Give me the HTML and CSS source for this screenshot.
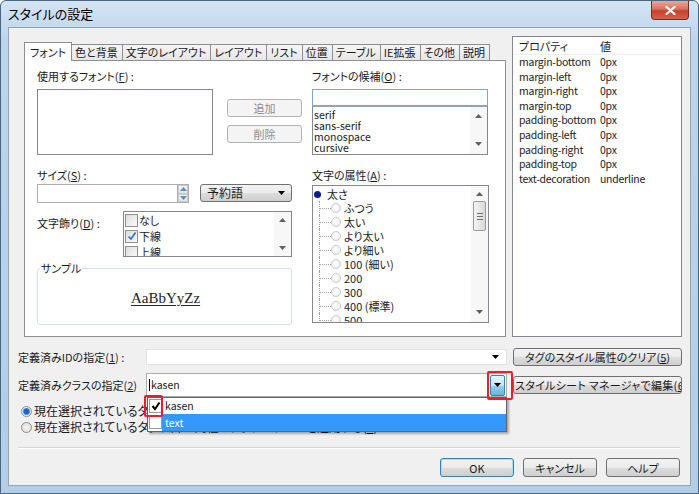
FILE: index.html
```html
<!DOCTYPE html>
<html lang="ja">
<head>
<meta charset="utf-8">
<title>スタイルの設定</title>
<link rel="stylesheet" href="styles.css">
</head>
<body>
<div class="window">
  <div class="titlebar">
    <span class="title">スタイルの設定</span>
    <div class="close"><svg width="11" height="9" viewBox="0 0 11 9"><path d="M1.5 1 L9.5 8 M9.5 1 L1.5 8" stroke="#fff" stroke-width="2.2" stroke-linecap="round"/></svg></div>
  </div>
  <div class="client">
    <div class="top">
      <div class="tabs-area">
        <div class="tabstrip">
          <div class="tab active">フォント</div>
          <div class="tab">色と背景</div>
          <div class="tab">文字のレイアウト</div>
          <div class="tab">レイアウト</div>
          <div class="tab">リスト</div>
          <div class="tab">位置</div>
          <div class="tab">テーブル</div>
          <div class="tab">IE拡張</div>
          <div class="tab">その他</div>
          <div class="tab">説明</div>
        </div>
        <div class="panel">
          <div class="col">
            <div class="lbl">使用するフォント(<u>F</u>) :</div>
            <div class="fontrow">
              <div class="listbox"></div>
              <div class="btncol">
                <div class="btn disabled">追加</div>
                <div class="btn disabled">削除</div>
              </div>
            </div>
            <div class="lbl gap13">サイズ(<u>S</u>) :</div>
            <div class="sizerow">
              <div class="numinput"></div>
              <div class="spin">
                <span class="spin-btn"><svg width="7" height="4" viewBox="0 0 7 4"><path d="M0 4L3.5 0L7 4Z" fill="#5b8fc7"/></svg></span>
                <span class="spin-btn"><svg width="7" height="4" viewBox="0 0 7 4"><path d="M0 0L3.5 4L7 0Z" fill="#5b8fc7"/></svg></span>
              </div>
              <div class="select"><span>予約語</span><svg width="7" height="4" viewBox="0 0 7 4"><path d="M0 0L3.5 4L7 0Z" fill="#000"/></svg></div>
            </div>
            <div class="decorow">
              <div class="lbl deco-lbl">文字飾り(<u>D</u>) :</div>
              <div class="checklist">
                <div class="cl-items">
                  <div class="cl-item"><span class="cb"></span>なし</div>
                  <div class="cl-item"><span class="cb"><svg width="10" height="10" viewBox="0 0 10 10"><path d="M1.5 5.5 L4 8 L8.5 1.5" fill="none" stroke="#2b6fc8" stroke-width="1.6"/></svg></span>下線</div>
                  <div class="cl-item"><span class="cb"></span>上線</div>
                </div>
                <div class="vscroll">
                  <svg width="7" height="4" viewBox="0 0 7 4"><path d="M0 4L3.5 0L7 4Z" fill="#606060"/></svg>
                  <svg width="7" height="4" viewBox="0 0 7 4"><path d="M0 0L3.5 4L7 0Z" fill="#606060"/></svg>
                </div>
              </div>
            </div>
            <fieldset class="sample">
              <legend>サンプル</legend>
              <div class="sample-text">AaBbYyZz</div>
            </fieldset>
          </div>
          <div class="col">
            <div class="lbl">フォントの候補(<u>O</u>) :</div>
            <div class="textinput"></div>
            <div class="fontlist">
              <div class="fl-items">
                <div>serif</div>
                <div>sans-serif</div>
                <div>monospace</div>
                <div>cursive</div>
              </div>
              <div class="vscroll">
                <svg width="7" height="4" viewBox="0 0 7 4"><path d="M0 4L3.5 0L7 4Z" fill="#606060"/></svg>
                <svg width="7" height="4" viewBox="0 0 7 4"><path d="M0 0L3.5 4L7 0Z" fill="#606060"/></svg>
              </div>
            </div>
            <div class="lbl gap13">文字の属性(<u>A</u>) :</div>
            <div class="tree">
              <div class="tree-items">
                <div class="tree-root"><span class="bullet"></span>太さ</div>
                <div class="tree-item"><span class="branch"></span><span class="rb"></span>ふつう</div>
                <div class="tree-item"><span class="branch"></span><span class="rb"></span>太い</div>
                <div class="tree-item"><span class="branch"></span><span class="rb"></span>より太い</div>
                <div class="tree-item"><span class="branch"></span><span class="rb"></span>より細い</div>
                <div class="tree-item"><span class="branch"></span><span class="rb"></span>100 (細い)</div>
                <div class="tree-item"><span class="branch"></span><span class="rb"></span>200</div>
                <div class="tree-item"><span class="branch"></span><span class="rb"></span>300</div>
                <div class="tree-item"><span class="branch"></span><span class="rb"></span>400 (標準)</div>
                <div class="tree-item"><span class="branch"></span><span class="rb"></span>500</div>
              </div>
              <div class="vscroll tree-scroll">
                <svg width="7" height="4" viewBox="0 0 7 4"><path d="M0 4L3.5 0L7 4Z" fill="#606060"/></svg>
                <div class="thumb"><span></span><span></span><span></span></div>
                <div class="track-fill"></div>
                <svg width="7" height="4" viewBox="0 0 7 4"><path d="M0 0L3.5 4L7 0Z" fill="#606060"/></svg>
              </div>
            </div>
          </div>
        </div>
      </div>
      <div class="props">
        <div class="props-head"><span>プロパティ</span><span>値</span></div>
        <div class="props-body">
          <span>margin-bottom</span><span>0px</span>
          <span>margin-left</span><span>0px</span>
          <span>margin-right</span><span>0px</span>
          <span>margin-top</span><span>0px</span>
          <span>padding-bottom</span><span>0px</span>
          <span>padding-left</span><span>0px</span>
          <span>padding-right</span><span>0px</span>
          <span>padding-top</span><span>0px</span>
          <span>text-decoration</span><span>underline</span>
        </div>
      </div>
    </div>

    <div class="form">
      <div class="flbl">定義済みIDの指定(<u>1</u>) :</div>
      <div class="combo id-combo"><svg width="7" height="4" viewBox="0 0 7 4"><path d="M0 0L3.5 4L7 0Z" fill="#000"/></svg></div>
      <div class="btn">タグのスタイル属性のクリア(<u>5</u>)</div>
      <div class="flbl">定義済みクラスの指定(<u>2</u>)</div>
      <div class="combo class-combo">
        <span class="caret"></span><span class="combo-text">kasen</span>
        <div class="dd-btn"><svg width="7" height="4" viewBox="0 0 7 4"><path d="M0 0L3.5 4L7 0Z" fill="#000"/></svg></div>
        <div class="redbox rb-dd"></div>
        <div class="dropdown">
          <div class="dd-item"><span class="dd-cb"><svg width="10" height="10" viewBox="0 0 10 10"><path d="M1.5 5 L4 8 L8.5 1.5" fill="none" stroke="#000" stroke-width="2"/></svg></span><span class="dd-txt">kasen</span></div>
          <div class="dd-item"><span class="dd-cb"></span><span class="dd-txt sel">text</span></div>
        </div>
        <div class="redbox rb-cb"></div>
      </div>
      <div class="btn btn-left">スタイルシート マネージャで編集(<u>6</u>)</div>
    </div>

    <div class="radios">
      <div class="radio-row"><span class="radio checked"></span>現在選択されているタグにスタイルを適用する(<u>3</u>)</div>
      <div class="radio-row"><span class="radio"></span>現在選択されているタグ以外の同種のタグにスタイルを適用する(<u>4</u>)</div>
    </div>

    <div class="sep"></div>

    <div class="footer">
      <div class="btn default">OK</div>
      <div class="btn">キャンセル</div>
      <div class="btn">ヘルプ</div>
    </div>
  </div>
</div>
</body>
</html>
```

FILE: styles.css
```css
* { box-sizing: border-box; }

body {
  margin: 0;
  width: 699px;
  height: 494px;
  overflow: hidden;
  background: #ffffff;
  font-family: "Noto Sans CJK JP", "Noto Sans", sans-serif;
  font-size: 11px;
  color: #1a1a1a;
  font-feature-settings: "palt" 1;
}

u { text-decoration: underline; text-underline-offset: 1px; }

.window {
  width: 699px;
  height: 494px;
  border: 1px solid #4a6584;
  border-radius: 6px 6px 0 0;
  background: linear-gradient(to bottom, #d4e4f4 0, #bcd4ec 40px, #b4cde7 100%);
  display: flex;
  flex-direction: column;
  overflow: hidden;
}

/* title bar */
.titlebar {
  height: 26px;
  flex: none;
  display: flex;
  justify-content: space-between;
  align-items: flex-start;
  padding-left: 7px;
}
.title {
  line-height: 26px;
  font-size: 13px;
  color: #000;
}
.close {
  width: 38px;
  height: 19px;
  margin-right: 9px;
  border: 1px solid #7a2b24;
  border-top: none;
  border-radius: 0 0 4px 4px;
  background: linear-gradient(to bottom, #e9a899 0%, #d8715f 45%, #c8402d 55%, #d6614b 100%);
  display: flex;
  align-items: center;
  justify-content: center;
}

/* client area */
.client {
  flex: 1;
  margin: 0 7px 7px 7px;
  border: 1px solid #8ea4bd;
  background: #f0f0f0;
}

.top {
  display: flex;
  align-items: flex-start;
  margin: 8px 0 0 15px;
}

.tabs-area {
  width: 482px;
  margin-top: 6px;
}

.tabstrip {
  display: flex;
  align-items: flex-end;
  height: 18px;
  padding-left: 1px;
  position: relative;
  z-index: 1;
}
.tab {
  height: 16px;
  line-height: 15px;
  padding: 0 4px 0 3px;
  margin-left: -1px;
  border: 1px solid #8c8e94;
  border-bottom: none;
  background: linear-gradient(to bottom, #f6f6f6, #e6e6e6);
  white-space: nowrap;
}
.tab.active {
  height: 19px;
  line-height: 18px;
  margin-bottom: -1px;
  background: #fff;
  padding: 0 5px;
}

.panel {
  height: 277px;
  border: 1px solid #8c8e94;
  background: #fff;
  padding: 8px 0 0 12px;
  display: grid;
  grid-template-columns: 265px 177px;
  column-gap: 10px;
  align-items: start;
}

.col { display: flex; flex-direction: column; align-items: flex-start; }

.lbl {
  height: 14px;
  line-height: 14px;
  white-space: nowrap;
}
.gap13 { margin-top: 13px; }

.fontrow { display: flex; margin-top: 6px; }
.listbox {
  width: 176px;
  height: 66px;
  border: 1px solid #828790;
  background: #fff;
}
.btncol {
  display: flex;
  flex-direction: column;
  gap: 8px;
  margin-left: 14px;
  padding-top: 10px;
}

.btn {
  height: 18px;
  border: 1px solid #707070;
  border-radius: 3px;
  background: linear-gradient(to bottom, #f2f2f2 0%, #ebebeb 50%, #dddddd 51%, #cfcfcf 100%);
  display: flex;
  align-items: center;
  justify-content: center;
  white-space: nowrap;
  line-height: 14px;
  overflow: hidden;
}
.btncol .btn { width: 75px; }
.btn.disabled {
  color: #8d8d8d;
  border-color: #adb2b5;
  background: #f4f4f4;
}
.btn.default {
  border-color: #3c7fb1;
  box-shadow: inset 0 0 0 1px #a6dcf6;
}

.sizerow {
  display: flex;
  align-items: flex-start;
  margin-top: 2px;
}
.numinput {
  width: 140px;
  height: 19px;
  border: 1px solid #abadb3;
  border-right: none;
  background: #fff;
}
.spin {
  width: 12px;
  height: 19px;
  display: flex;
  flex-direction: column;
  border: 1px solid #abadb3;
  background: #fff;
}
.spin-btn {
  flex: 1;
  display: flex;
  align-items: center;
  justify-content: center;
  background: linear-gradient(to bottom, #f4f4f4, #e2e2e2);
  border: 1px solid #c9c9c9;
}
.select {
  width: 92px;
  height: 18px;
  margin-left: 11px;
  border: 1px solid #707070;
  border-radius: 3px;
  background: linear-gradient(to bottom, #f2f2f2 0%, #ebebeb 50%, #dddddd 51%, #cfcfcf 100%);
  display: flex;
  align-items: center;
  justify-content: space-between;
  padding: 0 6px 0 6px;
  line-height: 14px;
  font-size: 12px;
}

.decorow {
  display: flex;
  margin-top: 8px;
}
.deco-lbl {
  width: 86px;
  margin-top: 5px;
}
.checklist {
  width: 169px;
  height: 46px;
  border: 1px solid #828790;
  background: #fff;
  display: flex;
  overflow: hidden;
}
.cl-items { flex: 1; overflow: hidden; }
.cl-item {
  height: 16px;
  line-height: 16px;
  display: flex;
  align-items: center;
}
.cb {
  width: 13px;
  height: 13px;
  margin: 0 1px 0 1px;
  border: 1px solid #8f8f8f;
  background: linear-gradient(135deg, #dcdcdc, #fbfbfb);
  display: flex;
  align-items: center;
  justify-content: center;
}

.vscroll {
  width: 17px;
  flex: none;
  display: flex;
  flex-direction: column;
  justify-content: space-between;
  align-items: center;
  padding: 6px 0;
  background: #f7f7f7;
}

.sample {
  margin: 4px 0 0 0;
  padding: 0 0 0 2px;
  width: 255px;
  height: 64px;
  border: 1px solid #d5dfe5;
  border-radius: 3px;
  min-width: 0;
}
.sample legend {
  padding: 0 1px;
  line-height: 14px;
}
.sample-text {
  margin-top: 14px;
  text-align: center;
  font-family: "Liberation Serif", "DejaVu Serif", serif;
  font-size: 15px;
  line-height: 18px;
  text-decoration: underline;
  text-underline-offset: 2px;
  color: #222;
}

.textinput {
  width: 176px;
  height: 17px;
  margin-top: 6px;
  border: 1px solid #7ea4cf;
  background: #fff;
}
.fontlist {
  width: 176px;
  height: 49px;
  border: 1px solid #828790;
  border-top-color: #9aa0a8;
  background: #fff;
  display: flex;
  overflow: hidden;
}
.fl-items {
  flex: 1;
  padding: 2px 0 0 1px;
  font-size: 10.5px;
  line-height: 11px;
}
.fontlist .vscroll { padding: 7px 0 8px; }

.tree {
  width: 177px;
  height: 138px;
  margin-top: 3px;
  border: 1px solid #828790;
  background: #fff;
  display: flex;
  overflow: hidden;
}
.tree-items { flex: 1; overflow: hidden; padding-top: 1px; }
.tree-root {
  height: 14px;
  line-height: 14px;
  display: flex;
  align-items: center;
  padding-left: 1px;
}
.bullet {
  width: 7px;
  height: 7px;
  border-radius: 50%;
  background: #0b1f8c;
  margin-right: 6px;
}
.tree-item {
  height: 14px;
  line-height: 14px;
  display: flex;
  align-items: center;
  padding-left: 6px;
}
.branch {
  width: 12px;
  height: 14px;
  border-left: 1px dotted #a0a0a0;
  background: repeating-linear-gradient(to right, #a0a0a0 0 1px, transparent 1px 2px) no-repeat 0 7px / 100% 1px;
}
.rb {
  width: 10px;
  height: 10px;
  border-radius: 50%;
  border: 1px solid #c8c8c8;
  background: radial-gradient(circle at 40% 40%, #fff, #ececec);
  margin-right: 3px;
}
.tree-scroll { padding: 6px 0 8px; justify-content: flex-start; }
.thumb {
  width: 13px;
  height: 30px;
  margin-top: 5px;
  border: 1px solid #9a9a9a;
  border-radius: 2px;
  background: linear-gradient(to right, #f4f4f4, #dadada);
  display: flex;
  flex-direction: column;
  align-items: center;
  justify-content: center;
  gap: 2px;
}
.thumb span { width: 6px; height: 1px; background: #707070; }
.track-fill { flex: 1; }

/* properties list */
.props {
  width: 170px;
  height: 301px;
  margin-left: 6px;
  border: 1px solid #828790;
  background: #fff;
}
.props-head {
  height: 18px;
  display: grid;
  grid-template-columns: 81px auto;
  padding-left: 6px;
  line-height: 18px;
  border-bottom: 1px solid #ececec;
}
.props-body {
  display: grid;
  grid-template-columns: 81px auto;
  padding: 0 0 0 6px;
  font-size: 10.5px;
  line-height: 14.6px;
  white-space: nowrap;
  letter-spacing: -0.25px;
  color: #222;
}

/* bottom form */
.form {
  display: grid;
  grid-template-columns: 122px 361px 169px;
  grid-template-rows: 19px 24px;
  column-gap: 6px;
  row-gap: 7px;
  align-items: center;
  margin: 10px 0 0 9px;
}
.flbl { white-space: nowrap; line-height: 14px; }
.combo {
  background: #fff;
  display: flex;
  align-items: center;
}
.id-combo {
  height: 16px;
  border: 1px solid #e2e2e2;
  justify-content: flex-end;
  padding-right: 7px;
}
.class-combo {
  height: 24px;
  border: 1px solid #abadb3;
  padding: 1px;
  position: relative;
  z-index: 2;
}
.caret {
  width: 1px;
  height: 12px;
  background: #000;
  margin-left: 1px;
}
.combo-text { font-size: 10.5px; margin-left: 1px; line-height: 14px; }
.dd-btn {
  margin-left: auto;
  width: 15px;
  height: 21px;
  border: 1px solid #3c7fb1;
  border-radius: 2px;
  background: linear-gradient(to bottom, #e5f4fc 0%, #c4e5f6 50%, #98d1ef 51%, #68b3db 100%);
  display: flex;
  align-items: center;
  justify-content: center;
}
.btn-left {
  justify-content: flex-start;
  padding-left: 1px;
  letter-spacing: 0.3px;
}

.redbox {
  position: absolute;
  border: 2px solid #e5202a;
  border-radius: 2px;
  z-index: 4;
}
.rb-dd { left: 340px; top: -3px; width: 26px; height: 29px; }
.rb-cb { left: -3px; top: 21px; width: 19px; height: 22px; }

.dropdown {
  position: absolute;
  left: 0;
  top: 23px;
  width: 360px;
  height: 35px;
  background: #fff;
  border: 1px solid #646464;
  box-shadow: 2px 2px 2px rgba(0, 0, 0, 0.3);
  z-index: 3;
  padding: 0;
}
.dd-item {
  height: 16px;
  display: flex;
  align-items: stretch;
}
.dd-item + .dd-item { height: 17px; }
.dd-cb {
  width: 13px;
  height: 14px;
  margin: 1px 0 0 1px;
  border: 1px solid #9a9a9a;
  background: #fff;
  display: flex;
  align-items: center;
  justify-content: center;
}
.dd-txt {
  flex: 1;
  margin-left: 0;
  padding-left: 3px;
  font-size: 10.5px;
  line-height: 16px;
}
.dd-txt.sel {
  background: #3399ff;
  color: #fff;
  line-height: 17px;
}

/* radios */
.radios {
  margin: 6px 0 0 12px;
}
.radio-row {
  height: 16px;
  display: flex;
  align-items: center;
  white-space: nowrap;
  line-height: 14px;
  font-size: 12px;
}
.radio {
  width: 11px;
  height: 11px;
  border-radius: 50%;
  border: 1px solid #8d8d8d;
  background: radial-gradient(circle, #f4f4f4, #d8d8d8);
  margin-right: 2px;
  display: flex;
  align-items: center;
  justify-content: center;
}
.radio.checked {
  background: radial-gradient(circle, #1f64c0 0 2.5px, #7fb4ea 3.5px, #e9eef5 4px);
}

.sep {
  margin: 12px 10px 0 9px;
  border-top: 1px solid #d6d6d6;
  border-bottom: 1px solid #ffffff;
}

.footer {
  display: flex;
  justify-content: flex-end;
  gap: 9px;
  margin: 9px 10px 0 0;
}
.footer .btn {
  width: 74px;
  height: 19px;
}
```
